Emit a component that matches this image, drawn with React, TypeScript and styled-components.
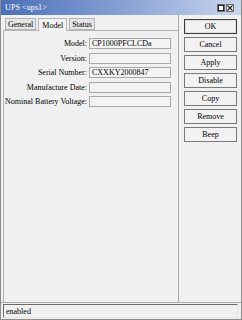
import React from 'react';
import styled, { createGlobalStyle } from 'styled-components';

const GlobalStyle = createGlobalStyle`
  html, body {
    margin: 0;
    padding: 0;
    background: #f0f0f0;
  }
  * {
    box-sizing: border-box;
  }
`;

const Window = styled.div`
  width: 242px;
  height: 320px;
  display: flex;
  flex-direction: column;
  background: #f0f0f0;
  border-left: 1px solid #8c8c8c;
  border-right: 1px solid #8c8c8c;
  border-bottom: 1px solid #8c8c8c;
  font-family: 'Liberation Serif', 'DejaVu Serif', serif;
  font-size: 8px;
  color: #000;
  overflow: hidden;
`;

const TitleBar = styled.div`
  height: 15px;
  flex: none;
  display: flex;
  align-items: center;
  justify-content: space-between;
  padding: 0 7px 0 4px;
  background: linear-gradient(90deg, #4b6fb6 0%, #7f9bd1 45%, #c9d6ee 100%);
  color: #fff;
`;

const Title = styled.span`
  font-size: 8px;
  letter-spacing: 0.1px;
`;

const TitleButtons = styled.div`
  display: flex;
  gap: 1px;
`;

const TitleButton = styled.div`
  width: 8px;
  height: 8px;
  background: #fff;
  border: 1px solid #6a6a6a;
  display: flex;
  align-items: center;
  justify-content: center;
`;

const Body = styled.div`
  flex: none;
  height: 288px;
  display: flex;
  border-bottom: 1px solid #a8a8a8;
`;

const LeftColumn = styled.div`
  width: 178px;
  flex: none;
  display: flex;
  flex-direction: column;
  padding: 2px 0 0 2px;
  border-right: 1px solid #a8a8a8;
`;

const Tabs = styled.div`
  height: 13px;
  display: flex;
  align-items: flex-end;
  gap: 2px;
  padding-left: 2px;
`;

const Tab = styled.div<{ $active?: boolean }>`
  height: ${(p) => (p.$active ? 13 : 12)}px;
  padding: 0 ${(p) => (p.$active ? 3 : 2)}px;
  display: flex;
  align-items: center;
  background: ${(p) => (p.$active ? '#f3f3f3' : '#e6e6e6')};
  border: 1px solid #b4b4b4;
  border-bottom: ${(p) => (p.$active ? 'none' : '1px solid #b4b4b4')};
  position: relative;
  top: ${(p) => (p.$active ? 1 : 0)}px;
`;

const Panel = styled.div`
  flex: 1;
  border-top: 1px solid #b4b4b4;
  border-left: 1px solid #b4b4b4;
  padding: 7px 0 0 0;
  display: flex;
  flex-direction: column;
  gap: 3.5px;
`;

const FieldRow = styled.div`
  display: flex;
  align-items: center;
  height: 11px;
`;

const Label = styled.div`
  width: 85px;
  text-align: right;
  white-space: nowrap;
  padding-right: 2px;
`;

const Field = styled.div`
  width: 82px;
  height: 11px;
  border: 1px solid #a8a8a8;
  background: #f3f3f3;
  padding: 0 2px;
  display: flex;
  align-items: center;
  white-space: nowrap;
  overflow: hidden;
`;

const RightColumn = styled.div`
  flex: 1;
  display: flex;
  flex-direction: column;
  gap: 3px;
  padding: 4px 0 0 5px;
`;

const Button = styled.div<{ $default?: boolean }>`
  width: 53px;
  height: 15px;
  display: flex;
  align-items: center;
  justify-content: center;
  background: #f2f2f2;
  border: 1px solid ${(p) => (p.$default ? '#3c3c3c' : '#7a7a7a')};
  box-shadow: ${(p) => (p.$default ? 'inset 0 0 0 1px #dcdcdc' : 'none')};
`;

const StatusBar = styled.div`
  flex: 1;
  padding: 1px 3px 2px 2px;
`;

const StatusBox = styled.div`
  height: 14px;
  display: flex;
  align-items: center;
  padding-left: 2px;
  border-top: 1px solid #6a6a6a;
  border-left: 1px solid #6a6a6a;
  border-right: 1px solid #e8e8e8;
  border-bottom: 1px solid #e8e8e8;
`;

const fields: { label: string; value: string }[] = [
  { label: 'Model:', value: 'CP1000PFCLCDa' },
  { label: 'Version:', value: '' },
  { label: 'Serial Number:', value: 'CXXKY2000847' },
  { label: 'Manufacture Date:', value: '' },
  { label: 'Nominal Battery Voltage:', value: '' },
];

const buttons = ['OK', 'Cancel', 'Apply', 'Disable', 'Copy', 'Remove', 'Beep'];

const App: React.FC = () => {
  return (
    <>
      <GlobalStyle />
      <Window>
        <TitleBar>
          <Title>UPS &lt;ups1&gt;</Title>
          <TitleButtons>
            <TitleButton>
              <svg width="6" height="6" viewBox="0 0 6 6">
                <rect x="0.5" y="0.5" width="5" height="5" fill="none" stroke="#222" strokeWidth="1" />
              </svg>
            </TitleButton>
            <TitleButton>
              <svg width="6" height="6" viewBox="0 0 6 6">
                <path d="M0.5 0.5 L5.5 5.5 M5.5 0.5 L0.5 5.5" stroke="#222" strokeWidth="1.3" />
              </svg>
            </TitleButton>
          </TitleButtons>
        </TitleBar>
        <Body>
          <LeftColumn>
            <Tabs>
              <Tab>General</Tab>
              <Tab $active>Model</Tab>
              <Tab>Status</Tab>
            </Tabs>
            <Panel>
              {fields.map((f) => (
                <FieldRow key={f.label}>
                  <Label>{f.label}</Label>
                  <Field>{f.value}</Field>
                </FieldRow>
              ))}
            </Panel>
          </LeftColumn>
          <RightColumn>
            {buttons.map((b) => (
              <Button key={b} $default={b === 'OK'}>
                {b}
              </Button>
            ))}
          </RightColumn>
        </Body>
        <StatusBar>
          <StatusBox>enabled</StatusBox>
        </StatusBar>
      </Window>
    </>
  );
};

export default App;
